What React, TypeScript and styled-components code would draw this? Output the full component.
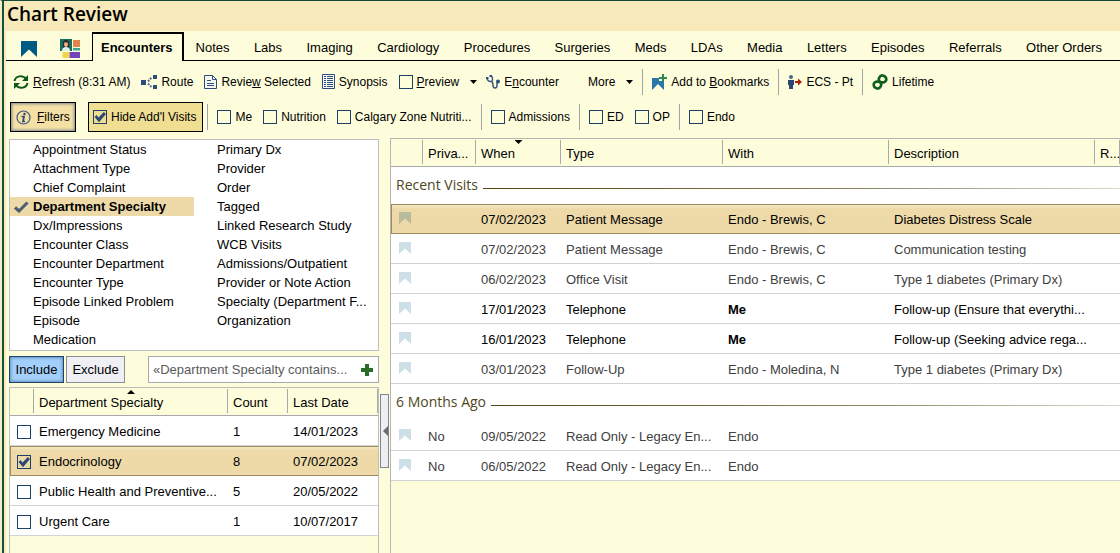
import React from "react";
import styled, { createGlobalStyle, css } from "styled-components";

const GlobalStyle = createGlobalStyle`
  *, *::before, *::after { box-sizing: border-box; }
  body {
    margin: 0;
    background: #fdfddc;
    color: #000;
    font: 13px/16px "Liberation Sans", Arial, sans-serif;
  }
  button, input { font: inherit; color: inherit; margin: 0; }
`;

const Frame = styled.div`
  min-height: 100vh;
  display: flex;
  flex-direction: column;
  border-top: 1px solid #134b38;
  border-left: 2px solid #f3ecc4;
  overflow: hidden;
`;

const Body = styled.div`
  flex: 1;
  display: flex;
  flex-direction: column;
  border-left: 2px solid #14523b;
`;

const TitleBar = styled.header`
  height: 30px;
  padding: 0 3px;
  background: #f7e9b9;
`;

const Title = styled.h1`
  margin: 0;
  font: 600 19px/26px "Open Sans", "Noto Sans", sans-serif;
`;

const Content = styled.div`
  flex: 1;
  display: flex;
  flex-direction: column;
  border-left: 2px solid #f7e9b9;
`;

const Tabs = styled.nav`
  height: 30px;
  display: flex;
  align-items: stretch;
  border-bottom: 1px solid #000;
  white-space: nowrap;
`;

const TextTabs = styled.div`
  flex: 1;
  display: flex;
  justify-content: space-between;
  padding-right: 6px;
`;

const Tab = styled.a<{ $active?: boolean }>`
  display: flex;
  align-items: center;
  padding: 4px 12px 0;
  color: #000;
  text-decoration: none;
  ${(p) =>
    p.$active &&
    css`
      font-weight: bold;
      padding: 0 9px 0 8px;
      margin: 1px 0 -1px;
      background: #fdfddc;
      border: solid #000;
      border-width: 2px 2px 0 1px;
    `}
`;

const IconTabs = styled.div`
  display: flex;
  align-items: center;
  gap: 23px;
  padding: 6px 12px 0 15px;
`;

const IconTab = styled.a`
  display: flex;
`;

const Toolbar = styled.div<{ $tight?: boolean }>`
  display: flex;
  align-items: center;
  gap: 9px;
  padding-left: ${(p) => (p.$tight ? 4 : 7)}px;
  height: ${(p) => (p.$tight ? 30 : 41)}px;
  font-size: 12px;
  white-space: nowrap;
`;

const ToolButton = styled.button`
  display: flex;
  align-items: center;
  gap: 4px;
  padding: 0;
  border: 0;
  background: none;
`;

const ToolGroup = styled.div<{ $gap?: number; $pad?: number }>`
  display: flex;
  align-items: center;
  gap: ${(p) => p.$gap || 0}px;
  padding-left: ${(p) => p.$pad || 0}px;
`;

const Separator = styled.span`
  width: 1px;
  height: 26px;
  background: #a3a3ab;
`;

const FiltersButton = styled.button`
  display: flex;
  align-items: center;
  gap: 6px;
  height: 30px;
  width: 66px;
  padding: 0 5px;
  border: 1px solid #000;
  background: #f4e0a4;
  box-shadow: inset 0 0 3px 1px #7d8790;
`;

const CheckLabel = styled.label`
  display: flex;
  align-items: center;
  gap: 4px;
`;

const ToggleLabel = styled(CheckLabel)`
  height: 30px;
  margin: 0 -5px 0 3px;
  padding: 0 6px 0 4px;
  border: 1px solid #000;
  background: #f0de93;
`;

const Checkbox = styled.input.attrs({ type: "checkbox" })`
  appearance: none;
  flex: none;
  display: block;
  width: 14px;
  height: 14px;
  border: 1px solid #1e3f68;
  background: transparent;
  &:checked::after {
    content: "";
    display: block;
    height: 12px;
    background: #2b4a76;
    clip-path: polygon(4% 50%, 22% 34%, 38% 54%, 82% 8%, 100% 24%, 42% 94%);
  }
`;

const Main = styled.main`
  flex: 1;
  display: flex;
  padding-left: 3px;
  margin-top: 6px;
`;

const Side = styled.section`
  flex: none;
  width: 370px;
  margin-top: 1px;
  display: flex;
  flex-direction: column;
`;

const FilterList = styled.div`
  display: grid;
  grid-template-columns: 184px 1fr;
  grid-template-rows: repeat(11, 19px);
  grid-auto-flow: column;
  background: #fff;
  border: 1px solid #bdbdbd;
  padding-bottom: 1px;
`;

const FilterOption = styled.button<{ $on?: boolean }>`
  display: flex;
  align-items: center;
  min-width: 0;
  padding: 0;
  border: 0;
  text-align: left;
  white-space: nowrap;
  background: ${(p) => (p.$on ? "#eddaa8" : "none")};
  font-weight: ${(p) => (p.$on ? "bold" : "normal")};
`;

const OptionMark = styled.span`
  flex: none;
  width: 23px;
  display: flex;
  justify-content: center;
`;

const ModeRow = styled.div`
  display: flex;
  margin: 5px 0 4px;
  gap: 2px;
`;

const ModeButton = styled.button<{ $on?: boolean }>`
  height: 27px;
  width: ${(p) => (p.$on ? 55 : 59)}px;
  padding: 0;
  border: 1px solid ${(p) => (p.$on ? "#1f4468" : "#8b8f95")};
  background: ${(p) => (p.$on ? "#a3d0fa" : "#eff0f4")};
  box-shadow: ${(p) => (p.$on ? "inset 0 0 3px 1px #6793bd" : "none")};
`;

const RuleBox = styled.div`
  flex: 1;
  min-width: 0;
  margin-left: 21px;
  display: flex;
  align-items: center;
  background: #fff;
  border: 1px solid #a8a8a8;
  padding: 0 5px 0 4px;
`;

const RuleInput = styled.input`
  flex: 1;
  min-width: 0;
  padding: 0;
  border: 0;
  outline: 0;
  background: none;
  color: #5a5a5a;
`;

const PlainButton = styled.button`
  display: flex;
  padding: 0;
  border: 0;
  background: none;
`;

const SideGrid = styled.div`
  flex: 1;
  border: 1px solid #bdbdbd;
  border-bottom: 0;
`;

const VisitGrid = styled.section`
  flex: 1;
  min-width: 0;
  border: solid #b5b5b5;
  border-width: 1px 0 0 1px;
`;

const Table = styled.table`
  width: 100%;
  table-layout: fixed;
  border-collapse: separate;
  border-spacing: 0;
`;

const HeadCell = styled.th<{ $sort?: "up" | "down" }>`
  height: 28px;
  padding: 2px 0 0 5px;
  text-align: left;
  font-weight: normal;
  white-space: nowrap;
  overflow: hidden;
  border-bottom: 1px solid #a9a9ad;
  background: linear-gradient(#a9a9ad, #a9a9ad) right 1px / 1px calc(100% - 3px) no-repeat;
  position: relative;
  &::after {
    content: ${(p) => (p.$sort ? '""' : "none")};
    position: absolute;
    top: ${(p) => (p.$sort === "up" ? 2 : 1)}px;
    left: calc(50% - 4px);
    width: 8px;
    height: 4px;
    background: #000;
    clip-path: ${(p) =>
      p.$sort === "up" ? "polygon(50% 0, 100% 100%, 0 100%)" : "polygon(0 0, 100% 0, 50% 100%)"};
  }
`;

const Row = styled.tr<{ $selected?: boolean; $dim?: boolean }>`
  color: ${(p) => (p.$dim ? "#404040" : "#000")};
  background: ${(p) =>
    p.$selected ? "linear-gradient(#f6ebcd, #eddaa8 5px)" : "#fff"};
  td {
    border-bottom: 1px solid ${(p) => (p.$selected ? "#a08c5a" : "#d0d4d6")};
    ${(p) => p.$selected && "border-top: 1px solid #a08c5a;"}
  }
  td:first-child {
    ${(p) => p.$selected && "box-shadow: inset 1px 0 #a08c5a;"}
  }
`;

const Cell = styled.td<{ $bold?: boolean }>`
  height: 30px;
  padding: 2px 0 0 5px;
  white-space: nowrap;
  overflow: hidden;
  font-weight: ${(p) => (p.$bold ? "bold" : "normal")};
`;

const MarkCell = styled(Cell)`
  padding: 0 0 2px 8px;
  svg { display: block; }
`;

const TickCell = styled(Cell)`
  padding: 2px 0 0 7px;
`;

const GroupCell = styled.td`
  height: 37px;
  padding: 0 0 2px;
  background: #fff;
`;

const GroupTitle = styled.div`
  display: flex;
  align-items: center;
  gap: 5px;
  padding-left: 5px;
  color: #4e4720;
  font: 14px/20px "Open Sans", "Noto Sans", sans-serif;
  white-space: nowrap;
  &::after {
    content: "";
    flex: 1;
    height: 1px;
    margin-top: 8px;
    background: linear-gradient(90deg, #4e4510, #8c8663 60%, #d8d8cc);
  }
`;

const Splitter = styled.div`
  flex: none;
  width: 11px;
  padding: 256px 0 0 1px;
`;

const SplitHandle = styled.button`
  width: 9px;
  height: 74px;
  padding: 0;
  border: 1px solid #84868a;
  background: #eceef2;
  display: flex;
  align-items: center;
  justify-content: flex-end;
`;

const Svg = ({ w, h, children }: { w: number; h: number; children: React.ReactNode }) => (
  <svg width={w} height={h} viewBox={`0 0 ${w} ${h}`} aria-hidden="true">
    {children}
  </svg>
);

const BookmarkShape = ({ size, color }: { size: number; color: string }) => (
  <svg width={size} height={size} viewBox="0 0 12 12" aria-hidden="true">
    <path d="M0 0h12v12L6 6.400 0 12z" fill={color} />
  </svg>
);

const CaretDown = () => (
  <Svg w={7} h={4}>
    <path d="M0 0h7L3.500 4z" fill="#000" />
  </Svg>
);

const SnapshotIcon = () => (
  <Svg w={20} h={20}>
    <path d="M0 0h12v12H0z" fill="#11705f" />
    <path d="M3 9V4Q3 1 6 1t3 3v5z" fill="#3a2424" />
    <path d="M4.200 3.500h3.600v3L6 8.500 4.200 6.500z" fill="#f2b48c" />
    <path d="M2 12q0-4 4-4t4 4z" fill="#dff0ea" />
    <path d="M13 1h7v7h-7z" fill="#e0844e" />
    <path d="M13 9h7v2.500h-7z" fill="#3aa48c" />
    <path d="M2.500 13H9v6H2.500z" fill="#f2d34c" />
    <path d="M9.500 13H20v6H9.500z" fill="#7445b8" />
  </Svg>
);

const RefreshIcon = () => (
  <Svg w={16} h={16}>
    <g fill="none" stroke="#0c5a16" strokeWidth="2">
      <path d="M1.500 7A6.300 5.600 0 0 1 12.800 4.500" />
      <path d="M14.500 9A6.300 5.600 0 0 1 3.200 11.500" />
    </g>
    <path d="M15 1V7H9z" fill="#0c5a16" />
    <path d="M1 15V9h6z" fill="#0c5a16" />
  </Svg>
);

const RouteIcon = () => (
  <Svg w={16} h={14}>
    <path d="M0 5h5v5H0zM12 0h4v4h-4zM12 10h4v4h-4z" fill="#2c4d7c" />
    <path d="M7 6.500L10.500 2.500M7 8.500l3.500 3.500" stroke="#5b7190" strokeWidth="2" strokeDasharray="2 1" />
  </Svg>
);

const ReviewIcon = () => (
  <Svg w={13} h={14}>
    <path d="M.5.5H8.500L12.500 4.500V13.500H.5z" fill="#f6f8f0" stroke="#2c4d7c" />
    <path d="M8.500.5V4.500H12.500" fill="none" stroke="#2c4d7c" />
    <path d="M3 5.500h4M3 8.500h7M3 10.500h7" stroke="#2c4d7c" />
  </Svg>
);

const SynopsisIcon = () => (
  <Svg w={13} h={15}>
    <path d="M.5.5h12v14H.5z" fill="#f6f8f0" stroke="#2c4d7c" />
    <path d="M2 2.500h2M5 2.500h6M2 4.500h2M5 4.500h6M2 6.500h2M5 6.500h6M2 8.500h2M5 8.500h6M2 10.500h2M5 10.500h6M2 12.500h2M5 12.500h6" stroke="#2c4d7c" />
  </Svg>
);

const StethoscopeIcon = () => (
  <Svg w={14} h={14}>
    <path d="M1 3q.3 3 3 3.500T6.500 4 5 1.500M5 6.500q2 .5 2 3.500t2 3 2-3V7.500" fill="none" stroke="#3e5880" strokeWidth="1.500" />
    <circle cx="12" cy="6.500" r="2" fill="#2c4d7c" />
    <path d="M0 3h2.500M3.500 1h2.500" stroke="#2c4d7c" strokeWidth="1.800" />
  </Svg>
);

const AddBookmarkIcon = () => (
  <Svg w={15} h={16}>
    <path d="M0 4h7v3h5v9L6 10 0 16z" fill="#2b78a8" />
    <path d="M10 0h2v3h3v2h-3v3h-2V5H7V3h3z" fill="#2e8757" />
  </Svg>
);

const PersonArrowIcon = () => (
  <Svg w={14} h={14}>
    <circle cx="3" cy="2" r="2" fill="#4a668c" />
    <path d="M0 5h6v5H5v4H1v-4H0z" fill="#2c4674" />
    <path d="M7 6h3V3.500L14 7l-4 3.500V8H7z" fill="#a82408" />
  </Svg>
);

const ChainIcon = () => (
  <Svg w={16} h={16}>
    <g fill="none" stroke="#0f5e1c" strokeWidth="2.600">
      <path d="M8.500 8.800Q5.800 6.500 7.300 3.600T11.500 1.700t2.800 3.300-2.300 3.200q-1.500.5-3.500-.2" />
      <path d="M7.500 7.200Q10.200 9.500 8.700 12.400T4.500 14.300 1.700 11t2.300-3.200q1.500-.5 3.500.2" />
    </g>
  </Svg>
);

const InfoIcon = () => (
  <Svg w={15} h={15}>
    <circle cx="7.500" cy="7.500" r="6.500" fill="none" stroke="#3e5880" strokeWidth="1.200" />
    <circle cx="8.500" cy="4" r="1.200" fill="#2c4674" />
    <path d="M5.500 6.500H8L7 11.500H9" fill="none" stroke="#2c4674" strokeWidth="1.700" />
  </Svg>
);

const CheckIcon = () => (
  <Svg w={15} h={12}>
    <path d="M1 6.500L5 10 13.500 1.500" fill="none" stroke="#4c5d72" strokeWidth="3" />
  </Svg>
);

const PlusIcon = () => (
  <Svg w={12} h={12}>
    <path d="M4 0h4v4h4v4H8v4H4V8H0V4h4z" fill="#2a6c28" />
  </Svg>
);

const TABS = ["Notes", "Labs", "Imaging", "Cardiology", "Procedures", "Surgeries", "Meds", "LDAs", "Media", "Letters", "Episodes", "Referrals", "Other Orders"];

const FILTERS = [
  "Appointment Status", "Attachment Type", "Chief Complaint", "Department Specialty", "Dx/Impressions",
  "Encounter Class", "Encounter Department", "Encounter Type", "Episode Linked Problem", "Episode", "Medication",
  "Primary Dx", "Provider", "Order", "Tagged", "Linked Research Study", "WCB Visits", "Admissions/Outpatient",
  "Provider or Note Action", "Specialty (Department F...", "Organization",
];

const SPECIALTIES = [
  { name: "Emergency Medicine", count: 1, date: "14/01/2023" },
  { name: "Endocrinology", count: 8, date: "07/02/2023", selected: true },
  { name: "Public Health and Preventive...", count: 5, date: "20/05/2022" },
  { name: "Urgent Care", count: 1, date: "10/07/2017" },
];

type Visit = {
  priv?: string;
  when: string;
  type: string;
  who: string;
  desc?: string;
  selected?: boolean;
  dim?: boolean;
};

const GROUPS: { title: string; visits: Visit[] }[] = [
  {
    title: "Recent Visits",
    visits: [
      { when: "07/02/2023", type: "Patient Message", who: "Endo - Brewis, C", desc: "Diabetes Distress Scale", selected: true },
      { when: "07/02/2023", type: "Patient Message", who: "Endo - Brewis, C", desc: "Communication testing", dim: true },
      { when: "06/02/2023", type: "Office Visit", who: "Endo - Brewis, C", desc: "Type 1 diabetes (Primary Dx)", dim: true },
      { when: "17/01/2023", type: "Telephone", who: "Me", desc: "Follow-up (Ensure that everythi..." },
      { when: "16/01/2023", type: "Telephone", who: "Me", desc: "Follow-up (Seeking advice rega..." },
      { when: "03/01/2023", type: "Follow-Up", who: "Endo - Moledina, N", desc: "Type 1 diabetes (Primary Dx)", dim: true },
    ],
  },
  {
    title: "6 Months Ago",
    visits: [
      { priv: "No", when: "09/05/2022", type: "Read Only - Legacy En...", who: "Endo", dim: true },
      { priv: "No", when: "06/05/2022", type: "Read Only - Legacy En...", who: "Endo", dim: true },
    ],
  },
];

const Check = ({ label }: { label: string }) => (
  <CheckLabel>
    <Checkbox />
    {label}
  </CheckLabel>
);

export default function App() {
  return (
    <Frame>
      <GlobalStyle />
      <Body>
        <TitleBar>
          <Title>Chart Review</Title>
        </TitleBar>
        <Content>
          <Tabs>
            <IconTabs>
              <IconTab href="#bookmarks" aria-label="Bookmarks"><BookmarkShape size={16} color="#005b84" /></IconTab>
              <IconTab href="#snapshot" aria-label="Snapshot"><SnapshotIcon /></IconTab>
            </IconTabs>
            <Tab href="#encounters" $active aria-current="page">Encounters</Tab>
            <TextTabs>
              {TABS.map((t) => (
                <Tab key={t} href={`#${t.toLowerCase().replace(" ", "-")}`}>{t}</Tab>
              ))}
            </TextTabs>
          </Tabs>

          <Toolbar>
            <ToolButton><RefreshIcon /><span><u>R</u>efresh (8:31 AM)</span></ToolButton>
            <ToolGroup $pad={2}>
              <ToolButton><RouteIcon />Route</ToolButton>
            </ToolGroup>
            <ToolGroup $pad={2}>
              <ToolButton><ReviewIcon /><span>Revie<u>w</u> Selected</span></ToolButton>
            </ToolGroup>
            <ToolGroup $pad={2}>
              <ToolButton><SynopsisIcon />Synopsis</ToolButton>
            </ToolGroup>
            <ToolGroup $gap={11} $pad={2}>
              <CheckLabel><Checkbox /><span><u>P</u>review</span></CheckLabel>
              <PlainButton aria-label="Preview options"><CaretDown /></PlainButton>
            </ToolGroup>
            <ToolButton><StethoscopeIcon /><span>E<u>n</u>counter</span></ToolButton>
            <ToolGroup $gap={11} $pad={20}>
              <ToolButton>More</ToolButton>
              <PlainButton aria-label="More actions"><CaretDown /></PlainButton>
            </ToolGroup>
            <Separator />
            <ToolButton><AddBookmarkIcon /><span>Add to <u>B</u>ookmarks</span></ToolButton>
            <Separator />
            <ToolButton><PersonArrowIcon />ECS - Pt</ToolButton>
            <Separator />
            <ToolButton><ChainIcon />Lifetime</ToolButton>
          </Toolbar>

          <Toolbar $tight>
            <FiltersButton><InfoIcon /><span><u>F</u>ilters</span></FiltersButton>
            <ToggleLabel><Checkbox defaultChecked />Hide Add'l Visits</ToggleLabel>
            <Separator />
            <ToolGroup $gap={11}>
              <Check label="Me" />
              <Check label="Nutrition" />
              <Check label="Calgary Zone Nutriti..." />
            </ToolGroup>
            <Separator />
            <Check label="Admissions" />
            <Separator />
            <ToolGroup $gap={11}>
              <Check label="ED" />
              <Check label="OP" />
            </ToolGroup>
            <Separator />
            <Check label="Endo" />
          </Toolbar>

          <Main>
            <Side>
              <FilterList>
                {FILTERS.map((f) => {
                  const on = f === "Department Specialty";
                  return (
                    <FilterOption key={f} $on={on} aria-pressed={on}>
                      <OptionMark>{on && <CheckIcon />}</OptionMark>
                      <span>{f}</span>
                    </FilterOption>
                  );
                })}
              </FilterList>
              <ModeRow>
                <ModeButton $on aria-pressed="true">Include</ModeButton>
                <ModeButton aria-pressed="false">Exclude</ModeButton>
                <RuleBox>
                  <RuleInput aria-label="Filter rule" defaultValue="«Department Specialty contains..." />
                  <PlainButton aria-label="Add rule"><PlusIcon /></PlainButton>
                </RuleBox>
              </ModeRow>
              <SideGrid>
                <Table>
                  <colgroup>
                    <col width={24} />
                    <col />
                    <col width={60} />
                    <col width={90} />
                  </colgroup>
                  <thead>
                    <tr>
                      <HeadCell aria-label="Selected" />
                      <HeadCell $sort="up">Department Specialty</HeadCell>
                      <HeadCell>Count</HeadCell>
                      <HeadCell>Last Date</HeadCell>
                    </tr>
                  </thead>
                  <tbody>
                    {SPECIALTIES.map((s) => (
                      <Row key={s.name} $selected={s.selected}>
                        <TickCell><Checkbox defaultChecked={s.selected} aria-label={s.name} /></TickCell>
                        <Cell>{s.name}</Cell>
                        <Cell>{s.count}</Cell>
                        <Cell>{s.date}</Cell>
                      </Row>
                    ))}
                  </tbody>
                </Table>
              </SideGrid>
            </Side>

            <Splitter>
              <SplitHandle aria-label="Collapse filters">
                <Svg w={5} h={10}><path d="M5 0v10L0 5z" fill="#6c6c6c" /></Svg>
              </SplitHandle>
            </Splitter>

            <VisitGrid>
              <Table>
                <colgroup>
                  <col width={32} />
                  <col width={53} />
                  <col width={85} />
                  <col width={162} />
                  <col width={166} />
                  <col />
                  <col width={25} />
                </colgroup>
                <thead>
                  <tr>
                    <HeadCell aria-label="Bookmark" />
                    <HeadCell>Priva...</HeadCell>
                    <HeadCell $sort="down">When</HeadCell>
                    <HeadCell>Type</HeadCell>
                    <HeadCell>With</HeadCell>
                    <HeadCell>Description</HeadCell>
                    <HeadCell>R...</HeadCell>
                  </tr>
                </thead>
                {GROUPS.map((g) => (
                  <tbody key={g.title}>
                    <tr>
                      <GroupCell colSpan={7}><GroupTitle>{g.title}</GroupTitle></GroupCell>
                    </tr>
                    {g.visits.map((v) => (
                      <Row key={v.when + v.desc} $selected={v.selected} $dim={v.dim}>
                        <MarkCell><BookmarkShape size={12} color={v.selected ? "#b9bc9c" : "#cddfe7"} /></MarkCell>
                        <Cell>{v.priv}</Cell>
                        <Cell>{v.when}</Cell>
                        <Cell>{v.type}</Cell>
                        <Cell $bold={v.who === "Me"}>{v.who}</Cell>
                        <Cell>{v.desc}</Cell>
                        <Cell />
                      </Row>
                    ))}
                  </tbody>
                ))}
              </Table>
            </VisitGrid>
          </Main>
        </Content>
      </Body>
    </Frame>
  );
}
